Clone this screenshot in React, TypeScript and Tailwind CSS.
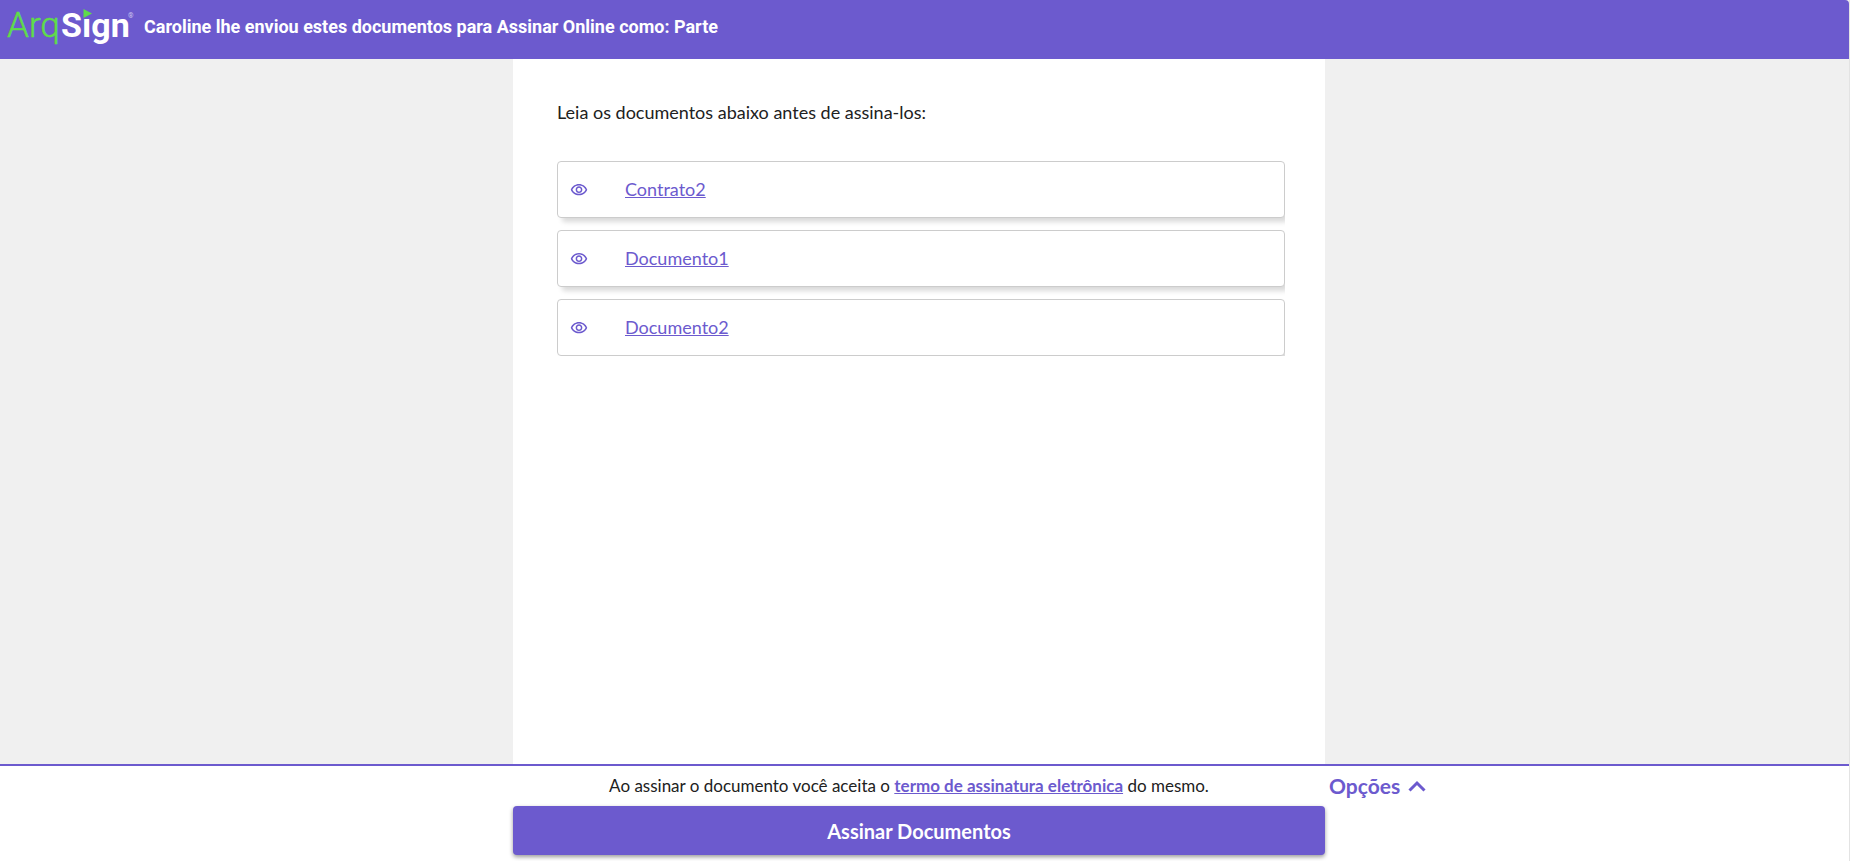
const documents = ["Contrato2", "Documento1", "Documento2"];

function Logo() {
  return (
    <svg viewBox="0 0 136 50" className="h-[50px] w-[136px] shrink-0" role="img" aria-label="ArqSign">
      <text x="7" y="37" fontFamily="Roboto, sans-serif" fontWeight="300" fontSize="35" fill="#5fdc4b" stroke="#5fdc4b" strokeWidth="0.5">
        Arq
      </text>
      <text x="61" y="37" fontFamily="Roboto, sans-serif" fontWeight="700" fontSize="34" fill="#ffffff">
        Sıgn
      </text>
      <path d="M83.5 9 L92 13.5 L83.5 18 Z" fill="#5fdc4b" />
      <text x="128" y="18" fontFamily="Roboto, sans-serif" fontSize="7" fill="#cfc8f0">
        ®
      </text>
    </svg>
  );
}

function EyeIcon() {
  return (
    <svg viewBox="0 0 24 24" className="size-[18px] shrink-0" fill="currentColor" aria-hidden="true">
      <path d="M12 6c3.79 0 7.17 2.13 8.82 5.5C19.17 14.87 15.79 17 12 17s-7.17-2.13-8.82-5.5C4.83 8.13 8.21 6 12 6m0-2C7 4 2.73 7.11 1 11.5 2.73 15.89 7 19 12 19s9.27-3.11 11-7.5C21.27 7.11 17 4 12 4zm0 5c1.38 0 2.5 1.12 2.5 2.5S13.38 14 12 14s-2.5-1.12-2.5-2.5S10.62 9 12 9m0-2c-2.48 0-4.5 2.02-4.5 4.5S9.52 16 12 16s4.5-2.02 4.5-4.5S14.48 7 12 7z" />
    </svg>
  );
}

export default function App() {
  return (
    <div className="flex min-h-screen flex-col border-r border-[#e3e3e3] bg-[#f0f0f0] font-['Lato','Open_Sans',sans-serif] text-[#212121]">
      <header className="flex h-[59px] items-start gap-2 rounded-tr-sm bg-[#6c5ace]">
        <Logo />
        <h1 className="pt-3 font-['Roboto',sans-serif] text-[18px] leading-[30px] font-bold text-white">
          Caroline lhe enviou estes documentos para Assinar Online como: Parte
        </h1>
      </header>

      <main className="grid grow grid-cols-[513fr_812fr_524fr]">
        <section className="col-start-2 bg-white pt-10 pr-10 pl-11">
          <p className="text-[18px] leading-[26px]">Leia os documentos abaixo antes de assina-los:</p>
          <ul className="mt-9 overflow-hidden">
            {documents.map((name) => (
              <li key={name} className="mb-3 last:mb-0">
                <a
                  href="#"
                  className="flex h-[57px] items-center gap-[37px] rounded-[4px] border border-[#cccccc] bg-white pl-3 text-[18px] text-[#6c5ace] shadow-[4px_5px_5px_-1px_rgba(0,0,0,0.15)]"
                >
                  <EyeIcon />
                  <span className="underline">{name}</span>
                </a>
              </li>
            ))}
          </ul>
        </section>
      </main>

      <footer className="grid grid-cols-[513fr_812fr_524fr] border-t-2 border-[#6c5ace] bg-white pb-[6px]">
        <p className="col-start-2 flex h-10 items-center justify-center pr-5 text-[17px]">
          <span>
            Ao assinar o documento você aceita o{" "}
            <a href="#" className="font-bold text-[#6c5ace] underline">
              termo de assinatura eletrônica
            </a>{" "}
            do mesmo.
          </span>
        </p>
        <button type="button" className="flex h-10 items-center gap-2 pl-1 text-[21px] font-bold text-[#6c5ace]">
          Opções
          <svg viewBox="0 0 18 12" className="h-3 w-[18px]" fill="none" stroke="currentColor" strokeWidth="3" aria-hidden="true">
            <path d="M1.5 10.5 L9 3 L16.5 10.5" />
          </svg>
        </button>
        <button
          type="button"
          className="col-start-2 h-[49px] rounded-[4px] bg-[#6c5ace] text-[20px] font-bold text-white shadow-[0_2px_4px_rgba(0,0,0,0.4)]"
        >
          Assinar Documentos
        </button>
      </footer>
    </div>
  );
}
